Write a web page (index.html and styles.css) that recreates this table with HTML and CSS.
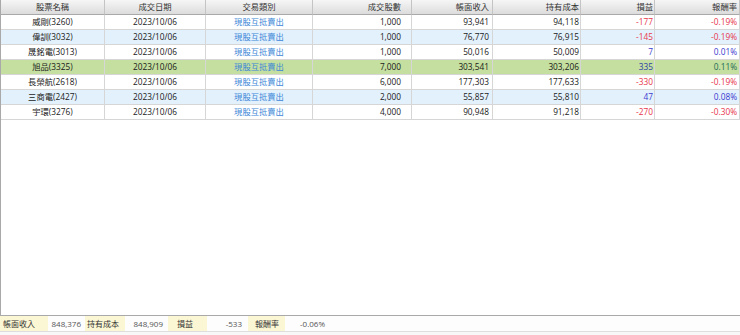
FILE: index.html
```html
<!DOCTYPE html>
<html lang="zh-Hant">
<head>
<meta charset="utf-8">
<title>現股互抵</title>
<link rel="stylesheet" href="styles.css">
</head>
<body>
<div class="panel">
  <div class="grid">
    <div class="row head">
      <div class="c c1">股票名稱</div>
      <div class="c c2">成交日期</div>
      <div class="c c3">交易類別</div>
      <div class="c c4 r">成交股數</div>
      <div class="c c5 r">帳面收入</div>
      <div class="c c6 r">持有成本</div>
      <div class="c c7 r">損益</div>
      <div class="c c8 r">報酬率</div>
    </div>
    <div class="row">
      <div class="c c1">威剛(3260)</div><div class="c c2">2023/10/06</div><div class="c c3 link">現股互抵賣出</div>
      <div class="c c4 r">1,000</div><div class="c c5 r">93,941</div><div class="c c6 r">94,118</div>
      <div class="c c7 r neg">-177</div><div class="c c8 r neg">-0.19%</div>
    </div>
    <div class="row alt">
      <div class="c c1">偉訓(3032)</div><div class="c c2">2023/10/06</div><div class="c c3 link">現股互抵賣出</div>
      <div class="c c4 r">1,000</div><div class="c c5 r">76,770</div><div class="c c6 r">76,915</div>
      <div class="c c7 r neg">-145</div><div class="c c8 r neg">-0.19%</div>
    </div>
    <div class="row">
      <div class="c c1">晟銘電(3013)</div><div class="c c2">2023/10/06</div><div class="c c3 link">現股互抵賣出</div>
      <div class="c c4 r">1,000</div><div class="c c5 r">50,016</div><div class="c c6 r">50,009</div>
      <div class="c c7 r pos">7</div><div class="c c8 r pos">0.01%</div>
    </div>
    <div class="row sel">
      <div class="c c1">旭品(3325)</div><div class="c c2">2023/10/06</div><div class="c c3 link">現股互抵賣出</div>
      <div class="c c4 r">7,000</div><div class="c c5 r">303,541</div><div class="c c6 r">303,206</div>
      <div class="c c7 r pos">335</div><div class="c c8 r pos">0.11%</div>
    </div>
    <div class="row">
      <div class="c c1">長榮航(2618)</div><div class="c c2">2023/10/06</div><div class="c c3 link">現股互抵賣出</div>
      <div class="c c4 r">6,000</div><div class="c c5 r">177,303</div><div class="c c6 r">177,633</div>
      <div class="c c7 r neg">-330</div><div class="c c8 r neg">-0.19%</div>
    </div>
    <div class="row alt">
      <div class="c c1">三商電(2427)</div><div class="c c2">2023/10/06</div><div class="c c3 link">現股互抵賣出</div>
      <div class="c c4 r">2,000</div><div class="c c5 r">55,857</div><div class="c c6 r">55,810</div>
      <div class="c c7 r pos">47</div><div class="c c8 r pos">0.08%</div>
    </div>
    <div class="row">
      <div class="c c1">宇環(3276)</div><div class="c c2">2023/10/06</div><div class="c c3 link">現股互抵賣出</div>
      <div class="c c4 r">4,000</div><div class="c c5 r">90,948</div><div class="c c6 r">91,218</div>
      <div class="c c7 r neg">-270</div><div class="c c8 r neg">-0.30%</div>
    </div>
  </div>
  <div class="footer">
    <div class="lbl l1">帳面收入</div><div class="val v1">848,376</div>
    <div class="lbl l2">持有成本</div><div class="val v2">848,909</div>
    <div class="lbl l3">損益</div><div class="val v3">-533</div>
    <div class="lbl l4">報酬率</div><div class="val v4">-0.06%</div>
  </div>
  <div class="status"></div>
</div>
</body>
</html>
```
FILE: styles.css
```css
html, body {
  margin: 0;
  padding: 0;
  background: #ffffff;
}
body {
  font-family: "Open Sans", "Noto Sans CJK TC", sans-serif;
  font-size: 8.3px;
  color: #1a1a1a;
  width: 740px;
  height: 335px;
  overflow: hidden;
}
.panel {
  display: flex;
  flex-direction: column;
  width: 740px;
  height: 335px;
}
.grid {
  height: 316px;
  box-sizing: border-box;
  border-left: 1px solid #a9a9a9;
  border-bottom: 1px solid #a9a9a9;
  display: flex;
  flex-direction: column;
}
.row {
  display: grid;
  grid-template-columns: 104px 101px 107px 99px 81px 88px 74px 85px;
  height: 15px;
  background: #ffffff;
}
.row.alt { background: #e3f1fc; }
.row.sel { background: #c4df9f; }
.c {
  box-sizing: border-box;
  border-right: 1px solid #d6d6d6;
  border-bottom: 1px solid #d6d6d6;
  height: 15px;
  line-height: 14px;
  text-align: center;
  white-space: nowrap;
  overflow: hidden;
  padding: 0 2px;
}
.c.r { text-align: right; padding-right: 1px; }
.c4.r { padding-right: 10px; }
.c5.r { padding-right: 3px; }
.c8.r { padding-right: 2px; }
.head .c {
  background: linear-gradient(#f6f6f6, #dcdcdc);
  border-right-color: #c4c4c4;
  border-bottom-color: #a9a9a9;
  color: #333;
}
.link { color: #3d87d8; }
.neg { color: #e8364b; }
.pos { color: #3a3ad0; }
.sel .pos { color: #2f3fa8; }
.sel .c8.pos { color: #226b55; }
.footer {
  display: flex;
  height: 15px;
  line-height: 15px;
  background: #fdfdfd;
  font-size: 8px;
}
.lbl {
  background: #fbf6d3;
  color: #333;
}
.val {
  color: #555;
  text-align: right;
}
.l1 { width: 45px; padding-left: 3px; }
.v1 { width: 33px; padding-right: 4px; }
.l2 { width: 38px; padding-left: 2px; }
.v2 { width: 38px; padding-right: 5px; }
.l3 { width: 30px; padding-left: 9px; }
.v3 { width: 35px; padding-right: 6px; }
.l4 { width: 30px; padding-left: 7px; }
.v4 { width: 40px; text-align: right; }
.status {
  flex: 1;
  border-top: 1px solid #dedede;
  background: #f8f8f8;
}
```
